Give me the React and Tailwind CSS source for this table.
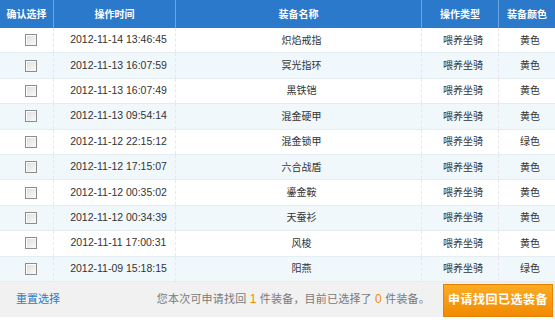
const rows = [
  ["2012-11-14 13:46:45", "炽焰戒指", "黄色"],
  ["2012-11-13 16:07:59", "冥光指环", "黄色"],
  ["2012-11-13 16:07:49", "黑铁铠", "黄色"],
  ["2012-11-13 09:54:14", "混金硬甲", "黄色"],
  ["2012-11-12 22:15:12", "混金锁甲", "绿色"],
  ["2012-11-12 17:15:07", "六合战盾", "黄色"],
  ["2012-11-12 00:35:02", "鎏金鞍", "黄色"],
  ["2012-11-12 00:34:39", "天蚕衫", "黄色"],
  ["2012-11-11 17:00:31", "风梭", "黄色"],
  ["2012-11-09 15:18:15", "阳燕", "绿色"],
];

const cols = "grid grid-cols-[54px_122px_246px_77px_56px]";
const font = { fontFamily: '"Liberation Sans", "Noto Sans CJK SC", sans-serif' };

const Check = () => (
  <span className="block w-[12px] h-[12px] border border-[#8d8d8d] bg-gradient-to-br from-[#dcdcdc] to-[#fbfbfb] shadow-[inset_1px_1px_0_#fff]" />
);

export default function App() {
  return (
    <div className="w-[555px] h-[327px] bg-white text-[#333]" style={font}>
      {/* 表头 */}
      <div className={`${cols} h-[28px] bg-[#2b79cb] text-white text-[10px] font-bold`}>
        {["确认选择", "操作时间", "装备名称", "操作类型", "装备颜色"].map((t, i) => (
          <div
            key={t}
            className={`flex items-center justify-center ${i < 4 ? "border-r border-[#6aa5e3]" : ""}`}
          >
            {t}
          </div>
        ))}
      </div>

      {rows.map(([time, name, color], i) => (
        <div
          key={time}
          className={`${cols} h-[25.4px] border-b border-[#e4edf2] ${i % 2 ? "bg-[#f0f8fb]" : "bg-white"}`}
        >
          <div className="flex items-center justify-center pl-[9px] border-r border-dashed border-[#ece6ec]">
            <Check />
          </div>
          <div className="flex items-center justify-center pl-[8px] text-[10.5px] border-r border-dashed border-[#ece6ec]">
            {time}
          </div>
          <div className="flex items-center justify-center pl-[6px] text-[10px] border-r border-dashed border-[#ece6ec]">
            {name}
          </div>
          <div className="flex items-center justify-center pl-[6px] text-[10px] border-r border-dashed border-[#ece6ec]">
            喂养坐骑
          </div>
          <div className="flex items-center justify-center pl-[6px] text-[10px]">{color}</div>
        </div>
      ))}

      {/* 底部操作栏 */}
      <div className="h-[35px] bg-[#f1f1f1] flex items-end pr-[2px]">
        <div className="flex-1 h-full flex items-center pl-[16px] text-[11px]">
          <span className="text-[#2b79cb]">重置选择</span>
          <span className="ml-auto mr-[13px] text-[#7a7a7a] tracking-[0.2px]">
            您本次可申请找回 <span className="text-[#f08a00] text-[12px]">1</span> 件装备，目前已选择了{" "}
            <span className="text-[#f08a00] text-[12px]">0</span> 件装备。
          </span>
        </div>
        <button className="w-[110px] h-[33px] bg-gradient-to-b from-[#fbab22] to-[#f18a00] border border-[#e58200] text-white text-[12px] font-bold tracking-[0.5px]">
          申请找回已选装备
        </button>
      </div>
    </div>
  );
}
